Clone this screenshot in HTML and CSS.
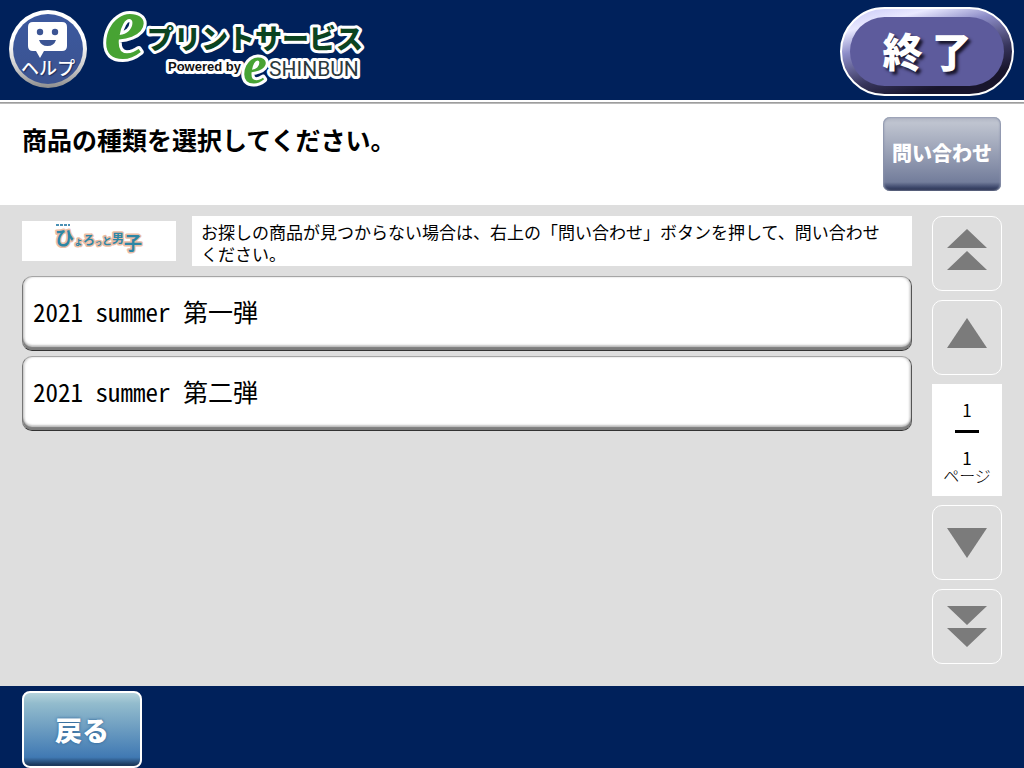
FILE: index.html
```html
<!DOCTYPE html>
<html lang="ja">
<head>
<meta charset="utf-8">
<meta name="viewport" content="width=device-width, initial-scale=1">
<title>eプリントサービス</title>
<link rel="stylesheet" href="styles.css">
</head>
<body>
<header class="topbar">
  <button class="help" type="button">
    <svg class="help-icon" viewBox="0 0 40 37" aria-hidden="true">
      <path d="M5 0H34Q39 0 39 5V24Q39 29 34 29H16L12 36L8 29H5Q0 29 0 24V5Q0 0 5 0Z" fill="#fff"/>
      <circle cx="12" cy="10" r="3.2" fill="#3b5494"/>
      <circle cx="27" cy="10" r="3.2" fill="#3b5494"/>
      <path d="M11 18H28Q26 24 19.500 24Q13 24 11 18Z" fill="#3b5494"/>
    </svg>
    <span class="help-label">ヘルプ</span>
  </button>
  <svg class="brand" viewBox="0 0 270 88" role="img" aria-label="eプリントサービス Powered by eSHINBUN">
    <g class="outlined">
      <text class="brand-e" x="3" y="58">e</text>
      <text class="brand-name" x="46" y="49">プリントサービス</text>
      <text class="brand-by" x="67" y="71">Powered by</text>
      <text class="brand-e-small" x="142" y="83">e</text>
      <text class="brand-sub" x="168" y="76">SHINBUN</text>
    </g>
  </svg>
  <button class="exit" type="button"><span class="exit-face">終 了</span></button>
</header>

<section class="prompt">
  <h1 class="prompt-title">商品の種類を選択してください。</h1>
  <button class="inquiry" type="button">問い合わせ</button>
</section>

<main class="content">
  <div class="catalog">
    <div class="intro">
      <div class="series">
        <svg class="series-logo" viewBox="0 0 90 40" role="img" aria-label="ひょろっと男子">
          <path d="M2 4H16" stroke="#4a91b5" stroke-width="2" stroke-dasharray="3 1"/>
          <text class="series-text" y="24"><tspan x="1" font-size="19">ひ</tspan><tspan font-size="9">ょ</tspan><tspan font-size="12">ろ</tspan><tspan font-size="7">っ</tspan><tspan font-size="10">と</tspan><tspan font-size="12" dy="-2">男</tspan><tspan font-size="18" dy="7">子</tspan></text>
        </svg>
      </div>
      <p class="notice">お探しの商品が見つからない場合は、右上の「問い合わせ」ボタンを押して、問い合わせ<br>ください。</p>
    </div>
    <button class="item" type="button">2021 summer 第一弾</button>
    <button class="item" type="button">2021 summer 第二弾</button>
  </div>

  <nav class="pager" aria-label="ページ送り">
    <button class="page-button page-button-up" type="button" aria-label="最初のページ">
      <svg class="arrow" viewBox="0 0 40 42"><path d="M20 0L40 19H0ZM20 22L40 41H0Z"/></svg>
    </button>
    <button class="page-button page-button-up" type="button" aria-label="前のページ">
      <svg class="arrow" viewBox="0 0 40 42"><path d="M20 5L40 35H0Z"/></svg>
    </button>
    <div class="page-count">
      <span class="page-now">1</span>
      <span class="page-total">1</span>
      <span class="page-unit">ページ</span>
    </div>
    <button class="page-button" type="button" aria-label="次のページ">
      <svg class="arrow" viewBox="0 0 40 42"><path d="M0 6H40L20 36Z"/></svg>
    </button>
    <button class="page-button" type="button" aria-label="最後のページ">
      <svg class="arrow" viewBox="0 0 40 42"><path d="M0 0H40L20 19ZM0 22H40L20 41Z"/></svg>
    </button>
  </nav>
</main>

<footer class="bottombar">
  <button class="back" type="button">戻る</button>
</footer>
</body>
</html>
```
FILE: styles.css
```css
* { box-sizing: border-box; }

body {
  margin: 0;
  min-height: 100vh;
  display: flex;
  flex-direction: column;
  background: #dedede;
  color: #000;
  font-family: "Noto Sans CJK JP", sans-serif;
}

button {
  margin: 0;
  padding: 0;
  border: 0;
  font-family: inherit;
  cursor: pointer;
}

.topbar {
  display: flex;
  align-items: flex-start;
  padding: 0 10px 4px 9px;
  background: #00215b;
}

.help {
  display: flex;
  flex-direction: column;
  align-items: center;
  width: 78px;
  height: 78px;
  margin-top: 10px;
  padding-top: 8px;
  border: 4px solid transparent;
  border-radius: 50%;
  background:
    linear-gradient(#3c599f, #3b5390) padding-box,
    linear-gradient(#fff 40%, #c9c9c9 75%, #8d8d8d) border-box;
  color: #fff;
}

.help-icon {
  flex: none;
  width: 40px;
  height: 37px;
}

.help-label {
  font-size: 18px;
  line-height: 16px;
  font-weight: 500;
  text-shadow: 1px 1px 1px #1c2c5c;
}

.brand {
  width: 270px;
  height: 88px;
  margin-left: 14px;
  overflow: visible;
}

.outlined text {
  paint-order: stroke;
  stroke: #fff;
  stroke-width: 6px;
  stroke-linejoin: round;
}

.brand-e,
.brand-e-small {
  font-family: "Liberation Serif", serif;
  font-style: italic;
  font-weight: 700;
  fill: #47a333;
}

.brand-e { font-size: 94px; }
.brand-e-small { font-size: 54px; }

.brand-name {
  font-size: 27px;
  font-weight: 900;
  fill: #0b4420;
}

.brand-by {
  font-family: "Liberation Sans", sans-serif;
  font-size: 13px;
  font-weight: 700;
  fill: #111;
}

.brand-sub {
  font-family: Roboto, sans-serif;
  font-size: 21px;
  fill: #2c3a3e;
}

.exit {
  width: 174px;
  height: 89px;
  margin-top: 7px;
  margin-left: auto;
  padding: 8px;
  border: 2px solid #fff;
  border-radius: 45px;
  background: linear-gradient(165deg, #c5c5f5 0%, #e9e9ff 18%, #8d8dc8 35%, #37355c 62%, #18152c 80%);
}

.exit-face {
  display: flex;
  align-items: center;
  justify-content: center;
  height: 100%;
  padding-bottom: 4px;
  border-radius: 36px;
  background: #5d5b9c;
  color: #fff;
  font-size: 40px;
  font-weight: 900;
  line-height: 1;
  text-shadow: 3px 3px 3px #18152c;
}

.prompt {
  display: flex;
  align-items: flex-start;
  justify-content: space-between;
  padding: 13px 23px 14px 22px;
  border-top: 2px solid #fff;
  background: linear-gradient(#8f8f8f, #c9c9c9 2px, #fff 2px);
}

.prompt-title {
  margin: 8px 0 0;
  font-size: 25px;
  line-height: 32px;
  font-weight: 700;
}

.inquiry {
  width: 118px;
  height: 74px;
  margin-top: 2px;
  padding-bottom: 4px;
  border-radius: 7px;
  background: linear-gradient(#b0b5c3, #bfc4d0 8%, #737d9b 88%, #3e486c 95%, #29304d);
  box-shadow: inset 1px 0 2px #8992aa, inset -1px 0 2px #8992aa;
  color: #fff;
  font-size: 20px;
  font-weight: 900;
}

.content {
  flex: 1;
  display: flex;
  gap: 20px;
  padding: 11px 22px 22px;
}

.catalog {
  flex: 1;
  display: flex;
  flex-direction: column;
  gap: 5px;
}

.intro {
  display: flex;
  align-items: center;
  gap: 16px;
  margin-bottom: 5px;
}

.series {
  display: flex;
  justify-content: center;
  width: 154px;
  height: 40px;
  background: #fff;
}

.series-logo {
  width: 90px;
  height: 40px;
}

.series-text {
  paint-order: stroke;
  fill: #2d86a5;
  stroke: #ebbda5;
  stroke-width: 3px;
  stroke-linejoin: round;
  font-weight: 700;
}

.notice {
  flex: 1;
  margin: 0;
  padding: 5px 9px 1px;
  background: #fff;
  font-size: 17px;
  line-height: 22px;
}

.item {
  height: 75px;
  padding: 0 10px 5px;
  border: 1px solid;
  border-color: #a5a5a5 #555 #333 #777;
  border-radius: 10px;
  background: #fff;
  box-shadow: inset 0 -3px 1px #7d7d7d, inset 0 -5px 2px #c4c4c4, inset 2px 0 2px #ddd, inset -2px 0 2px #ddd;
  color: #000;
  font-size: 25px;
  font-feature-settings: "hwid";
  text-align: left;
}

.pager {
  display: flex;
  flex-direction: column;
  gap: 9px;
  width: 70px;
}

.page-button {
  display: flex;
  align-items: center;
  justify-content: center;
  height: 75px;
  border: 1px solid #fff;
  border-radius: 10px;
  background: #dedede;
}

.page-button-up { padding-bottom: 8px; }

.arrow {
  width: 40px;
  height: 42px;
  fill: #7b7b7b;
}

.page-count {
  display: flex;
  flex-direction: column;
  align-items: center;
  height: 112px;
  padding-top: 16px;
  background: #fff;
  font-size: 17px;
  line-height: 20px;
}

.page-now {
  width: 24px;
  padding-bottom: 10px;
  border-bottom: 3px solid #000;
  text-align: center;
}

.page-total { margin-top: 15px; }

.page-unit {
  font-size: 16px;
  line-height: 14px;
  font-weight: 300;
}

.bottombar {
  padding: 5px 22px 0;
  background: #00215b;
}

.back {
  display: block;
  width: 120px;
  height: 77px;
  border: 2px solid #fff;
  border-radius: 8px;
  background: linear-gradient(#b5d3dc, #93bccd 14%, #4079b3 88%, #1d3a5e 98%);
  color: #fff;
  font-size: 27px;
  font-weight: 900;
  text-shadow: 0 0 3px #235c91;
}
```
